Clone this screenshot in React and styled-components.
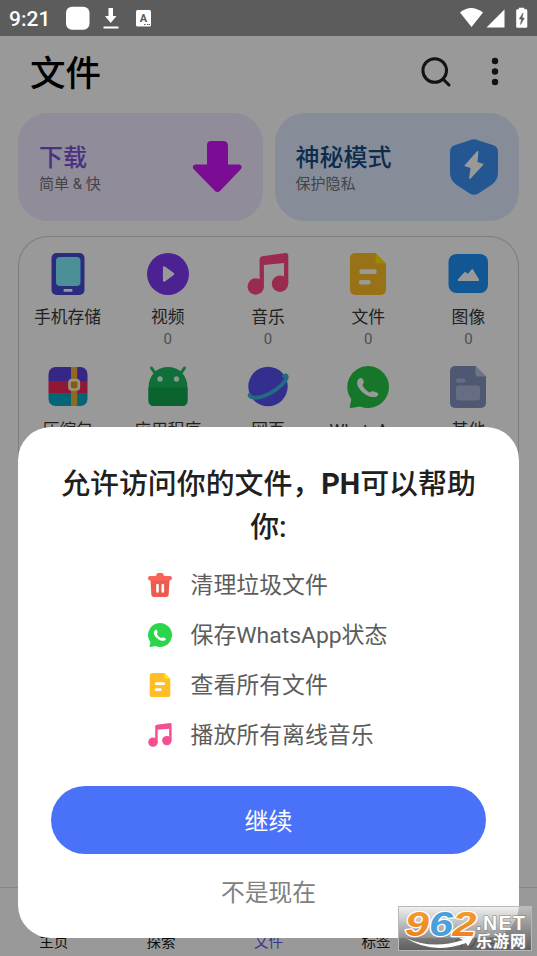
import styled, { createGlobalStyle } from "styled-components";

const GlobalStyle = createGlobalStyle`
	* {
		box-sizing: border-box;
	}
	body {
		margin: 0;
		font-family: Roboto, "Noto Sans CJK SC", sans-serif;
	}
	svg {
		display: block;
		flex: none;
		overflow: visible;
	}
`;

const Screen = styled.div`
	position: relative;
	width: 537px;
	height: 956px;
	overflow: hidden;
	display: flex;
	flex-direction: column;
	background-color: #ffffff;
`;
const StatusBar = styled.div`
	height: 36px;
	flex: none;
	display: flex;
	align-items: center;
	padding: 0 9px;
	background-color: #5c5c5c;
	color: white;
`;
const Clock = styled.span`
	width: 57px;
	font-size: 21px;
	font-weight: 500;
	line-height: 36px;
	padding-top: 1px;
`;
const Spacer = styled.div`
	flex: 1;
`;
const Header = styled.header`
	height: 77px;
	flex: none;
	display: flex;
	align-items: flex-start;
	padding: 10px 18px 0 30px;
`;
const PageTitle = styled.h1`
	flex: 1;
	margin: 0;
	font-size: 35.5px;
	line-height: 56px;
	font-weight: 500;
	color: #000;
`;
const HeaderActions = styled.div`
	display: flex;
	gap: 40px;
	padding: 11px 20px 0 0;
`;
const Cards = styled.div`
	display: flex;
	gap: 12px;
	padding: 0 18px;
`;
const Card = styled.div`
	flex: 1;
	height: 108px;
	display: flex;
	align-items: center;
	justify-content: space-between;
	padding: 0 21px;
	border-radius: 30px;
	background-color: ${(props) => props.$bg};
`;
const CardLabel = styled.div`
	padding-top: 4px;
`;
const CardTitle = styled.div`
	font-size: 24px;
	line-height: 30px;
	font-weight: 500;
	color: ${(props) => props.$color};
`;
const CardText = styled.div`
	font-size: 15px;
	line-height: 22px;
	color: #707078;
`;
const Panel = styled.div`
	flex: 1;
	margin: 15px 18px 20px;
	padding-top: 17px;
	box-shadow: inset 0 0 0 1px #d0d0d0;
	border-radius: 30px;
	display: grid;
	grid-template-columns: repeat(5, 1fr);
	grid-auto-rows: 112.5px;
`;
const Category = styled.div`
	display: flex;
	flex-direction: column;
	align-items: center;
	padding-right: 1px;
	white-space: nowrap;
`;
const CategoryName = styled.div`
	margin-top: 10px;
	font-size: 16.8px;
	line-height: 24px;
	color: #383838;
`;
const Count = styled.div`
	font-size: 15px;
	line-height: 20px;
	color: #858585;
`;
const Nav = styled.nav`
	height: 69px;
	flex: none;
	display: flex;
	align-items: flex-end;
	padding-bottom: 2px;
	border-top: 1px solid #dedede;
`;
const NavItem = styled.div`
	flex: 1;
	text-align: center;
	font-size: 14.5px;
	line-height: 22px;
	color: ${(props) => (props.$active ? "#6558ee" : "#181818")};
`;
const Scrim = styled.div`
	position: absolute;
	inset: 36px 0 0;
	padding: 391px 18px 18px;
	background-color: rgba(0, 0, 0, 0.4);
`;
const Sheet = styled.div`
	height: 511px;
	display: flex;
	flex-direction: column;
	align-items: center;
	padding-top: 36px;
	border-radius: 33px;
	background-color: white;
`;
const SheetTitle = styled.h2`
	margin: 0;
	width: 436px;
	text-align: center;
	font-size: 28.9px;
	line-height: 42.5px;
	font-weight: 500;
	color: #202020;
`;
const Latin = styled.span`
	font-weight: 700;
`;
const Features = styled.div`
	width: 242px;
	margin-top: 12px;
`;
const Feature = styled.div`
	height: 50px;
	display: flex;
	align-items: center;
	gap: 19px;
	font-size: 22.9px;
	line-height: 34px;
	white-space: nowrap;
	color: #5c5c5c;
`;
const FeatureText = styled.span`
	padding-top: 2px;
`;
const Continue = styled.button`
	width: 435px;
	height: 68px;
	margin-top: 26px;
	padding: 0 0 2px;
	border: 0;
	border-radius: 34px;
	font-family: inherit;
	font-size: 24px;
	font-weight: 400;
	color: white;
	background-color: #4a72f8;
`;
const Later = styled.button`
	margin-top: 20px;
	padding: 0;
	border: 0;
	background: none;
	font-family: inherit;
	font-size: 23.8px;
	line-height: 38px;
	color: #808080;
`;
const Watermark = styled.div`
	position: absolute;
	right: 5px;
	bottom: 5px;
	width: 134px;
	height: 45px;
	border: 1px solid #b9b9b9;
	background: linear-gradient(rgba(225, 225, 225, 0.5), rgba(85, 85, 85, 0.85));
`;

const PhoneIcon = () => (
	<svg width="42" height="42" viewBox="0 0 42 42">
		<rect x="4.5" width="33" height="42" rx="5" fill="#4949d5" />
		<rect x="9" y="4" width="24.5" height="29" rx="4" fill="#7df1fb" />
		<rect x="16.5" y="36" width="9" height="2.8" rx="1" fill="#fff" />
	</svg>
);
const VideoIcon = () => (
	<svg width="42" height="42" viewBox="0 0 42 42">
		<circle cx="21" cy="21" r="21" fill="#7f3af5" />
		<path d="M17.2 14.5L26 21L17.2 27.5Z" fill="#fff" stroke="#fff" strokeWidth="2.5" strokeLinejoin="round" />
	</svg>
);
const MusicIcon = ({ size = 42, color = "#ff4a82" }) => (
	<svg width={size} height={size} viewBox="0 0 42 42">
		<g fill={color}>
			<circle cx="8.7" cy="33.5" r="8.2" />
			<circle cx="33" cy="30.8" r="8.2" />
			<path d="M12.6 6.2Q12.6 3.6 15.2 3.2L38.6 0Q41.3-.2 41.3 2.5V31H37V10L16.9 12V34H12.6Z" />
		</g>
	</svg>
);
const FileIcon = ({ size = 42 }) => (
	<svg width={size} height={size} viewBox="0 0 42 42">
		<path d="M7 0H28.5L39 10.5V37A5 5 0 0 1 34 42H8A5 5 0 0 1 3 37V5A5 5 0 0 1 8 0Z" fill="#ffbd26" />
		<path d="M28.5 0L39 10.5H31A2.5 2.5 0 0 1 28.5 8Z" fill="#ffe600" />
		<path d="M14.5 18.6H27.5M14 29.2H21.5" fill="none" stroke="#fff" strokeWidth="4.6" strokeLinecap="round" />
	</svg>
);
const ImageIcon = () => (
	<svg width="42" height="42" viewBox="0 0 42 42">
		<rect x="1.5" y="1" width="39.5" height="39" rx="8" fill="#1b91f5" />
		<path d="M11.7 27L18.2 20L21 22.3L25.2 17L31.2 27Z" fill="#fff" stroke="#fff" strokeWidth="2" strokeLinejoin="round" />
	</svg>
);
const ZipIcon = () => (
	<svg width="42" height="42" viewBox="0 0 42 42">
		<clipPath id="zip">
			<rect x="1.5" y="1" width="39" height="39" rx="7" />
		</clipPath>
		<g clipPath="url(#zip)">
			<rect width="42" height="15" fill="#5b41dc" />
			<rect y="15" width="42" height="12" fill="#f22959" />
			<rect y="27" width="42" height="15" fill="#04abc9" />
			<rect x="24" width="6.2" height="42" fill="#efb12d" />
		</g>
		<rect x="22.5" y="14.2" width="9.3" height="9.3" rx="2.5" fill="#d49c20" stroke="#fff1d1" strokeWidth="2.7" />
	</svg>
);
const AndroidIcon = () => (
	<svg width="42" height="42" viewBox="0 0 42 42">
		<path d="M4.5 2L8 7M37.5 2L34 7" stroke="#16bd60" strokeWidth="3" strokeLinecap="round" />
		<path d="M1.5 22C1.5 9 10 1 21 1S40.5 9 40.5 22V34Q40.5 40 35 40H7Q1.5 40 1.5 34Z" fill="#1bb95e" />
		<path d="M1.5 21.5H40.5V34Q40.5 40 35 40H7Q1.5 40 1.5 34Z" fill="#13a74e" />
		<circle cx="13" cy="13" r="2.7" fill="#d9ffe9" />
		<circle cx="29.5" cy="13" r="2.7" fill="#d9ffe9" />
	</svg>
);
const PlanetIcon = () => (
	<svg width="42" height="42" viewBox="0 0 42 42">
		<circle cx="21" cy="20.5" r="19.7" fill="#554fef" />
		<path
			d="M2.6 28.8C2 33 13 32.800 23 27.300C32 22.500 39.500 15 39.800 11Q39.800 8.800 37 9.800"
			fill="none"
			stroke="#38b4d6"
			strokeWidth="3.8"
			strokeLinecap="round"
		/>
	</svg>
);
const WhatsAppIcon = ({ size = 42, color = "#26c545" }) => (
	<svg width={size} height={size} viewBox="0 0 42 42">
		<path d="M21 0A21 21 0 1 1 13 40.4L4 42Q2.5 42 2.8 40.5L4.3 33.5A21 21 0 0 1 21 0Z" fill={color} />
		<path
			d="M11.3 13.5C12.4 11.9 14.4 11.5 15.5 12.7C16.8 14.3 17.2 16.5 16.2 17.8L15.5 19C17 22.6 19.5 25 23 26.6L24.3 25.5C25.7 24.8 29.7 26 31 27.4C31.9 28.6 30 30.7 28 31C19.4 32.3 9.3 22 10.2 16C10.3 15 10.7 14.2 11.3 13.5Z"
			fill="#fff"
		/>
	</svg>
);
const OtherIcon = () => (
	<svg width="42" height="42" viewBox="0 0 42 42">
		<path d="M8 0H28.5L39 10.5V37A5 5 0 0 1 34 42H8A5 5 0 0 1 3 37V5A5 5 0 0 1 8 0Z" fill="#8493c0" />
		<path d="M28.5 0L39 10.5H31A2.5 2.5 0 0 1 28.5 8Z" fill="#b8c3df" />
		<rect x="9" y="12.5" width="9.5" height="4" rx="2" fill="#aab7dc" />
		<rect x="9" y="19.5" width="24" height="15" rx="3" fill="#aab7dc" />
	</svg>
);
const TrashIcon = () => (
	<svg width="24" height="24" viewBox="0 0 24 24">
		<path d="M2.5 7H21.5L20.7 21.5Q20.5 24 18 24H6Q3.5 24 3.3 21.5Z" fill="#eb5b4e" />
		<path d="M2 3H8Q8.3 0 10 0H14Q15.7 0 16 3H22Q24 3 24 5T22 7.5H2Q0 7.5 0 5.3T2 3Z" fill="#fa6357" />
		<path d="M9.5 12V18.5M14.8 12V18.500" stroke="#fff" strokeWidth="2.6" strokeLinecap="round" />
	</svg>
);
const SearchIcon = () => (
	<svg width="30" height="30" viewBox="0 0 30 30" fill="none" stroke="#202020" strokeWidth="3">
		<circle cx="13.7" cy="13.5" r="11.8" />
		<path d="M22 22L28 28" strokeLinecap="round" />
	</svg>
);
const MoreIcon = () => (
	<svg width="8" height="30" viewBox="0 0 8 30" fill="#202020">
		<circle cx="4" cy="4" r="3.2" />
		<circle cx="4" cy="14.5" r="3.2" />
		<circle cx="4" cy="25" r="3.2" />
	</svg>
);
const ArrowIcon = () => (
	<svg width="50" height="52" viewBox="0 0 50 52">
		<path
			d="M19 0H31Q36 0 36 5V23.5H47.5Q51 24.5 49 28L28 50Q25.500 52.3 23 50L1.5 28Q-.5 24.5 3 23.5H15V4Q15 0 19 0Z"
			fill="#cc16f7"
		/>
	</svg>
);
const ShieldIcon = () => (
	<svg width="48" height="56" viewBox="0 0 48 56">
		<path
			d="M20 1.2Q24-.7 28 1.2L43.500 6.2Q48 8 48 13V34Q48 41 42 45.5L28 54.7Q24 57 20 54.7L6 45.5Q0 41 0 34V13Q0 8 4.5 6.2Z"
			fill="#3d8ff2"
		/>
		<path d="M27.5 13L15.5 26.5L21.5 28.5L20 39L32.5 25.5L26.5 23.5Z" fill="#fff" stroke="#fff" strokeWidth="1.8" strokeLinejoin="round" />
	</svg>
);

const NoticeIcons = () => (
	<svg width="86" height="24" viewBox="0 0 86 24" fill="#fff">
		<rect width="23.5" height="23" y=".8" rx="6" />
		<path d="M42.5 2H47V10H50.5L44.7 17L39 10H42.5Z" />
		<rect x="37.5" y="20.5" width="15" height="2" />
		<rect x="70" y="4" width="15" height="16.5" rx="1.5" />
		<text x="77.5" y="15.8" textAnchor="middle" fontFamily="Roboto" fontSize="11" fontWeight="700" fill="#5c5c5c">
			A
		</text>
		<path d="M78 18h1.500v1H78zM81 18h1.500v1H81zM83 18h1v1h-1z" fill="#5c5c5c" />
	</svg>
);
const SystemIcons = () => (
	<svg width="68" height="22" viewBox="0 0 68 22" fill="#fff">
		<path d="M0 5.5Q11-3.5 23 5.5L11.5 20Z" />
		<path d="M44.5 2.5V20.5H26.5Z" />
		<path d="M58.8 2.2V.8H64.3V2.2H66Q67.3 2.2 67.3 3.5V19.5Q67.3 20.7 66 20.7H57.5Q56.2 20.7 56.2 19.5V3.5Q56.2 2.2 57.5 2.2Z" />
		<path d="M63 6L59.3 12H61.500L60.500 17.500L64.300 11H62Z" fill="#5c5c5c" stroke="#5c5c5c" strokeWidth=".6" />
	</svg>
);
const SiteLogo = () => (
	<svg width="132" height="43" viewBox="0 0 132 43">
		<defs>
			<linearGradient id="orange" x2="0" y2="1">
				<stop offset="0" stopColor="#f5a52e" />
				<stop offset="1" stopColor="#ef7a20" />
			</linearGradient>
		</defs>
		<path d="M7 31Q33 43 64 33L60 31L75 29L69 39L67 36Q33 48 7 31Z" fill="#fff" />
		<g
			fontFamily="Liberation Sans"
			fontStyle="italic"
			fontWeight="700"
			fontSize="35"
			stroke="#fff"
			strokeWidth="2.4"
			paintOrder="stroke"
			strokeLinejoin="round">
			<text x="6" y="28.5" fill="url(#orange)" textLength="24" lengthAdjust="spacingAndGlyphs">
				9
			</text>
			<text x="30" y="28.5" fill="#4a9fdc" textLength="24" lengthAdjust="spacingAndGlyphs">
				6
			</text>
			<text x="53.5" y="28.5" fill="url(#orange)" textLength="24" lengthAdjust="spacingAndGlyphs">
				2
			</text>
		</g>
		<g fill="#fff" stroke="#858585" strokeWidth="1.2" paintOrder="stroke" fontWeight="700">
			<text x="77" y="22.5" fontFamily="Liberation Sans" fontSize="19.5" letterSpacing="1.5">
				.NET
			</text>
			<text x="77" y="39.5" fontFamily="Noto Sans CJK SC" fontSize="16" textLength="50">
				乐游网
			</text>
		</g>
	</svg>
);

const categories = [
	{ name: "手机存储", icon: <PhoneIcon /> },
	{ name: "视频", icon: <VideoIcon />, count: 0 },
	{ name: "音乐", icon: <MusicIcon />, count: 0 },
	{ name: "文件", icon: <FileIcon />, count: 0 },
	{ name: "图像", icon: <ImageIcon />, count: 0 },
	{ name: "压缩包", icon: <ZipIcon /> },
	{ name: "应用程序", icon: <AndroidIcon /> },
	{ name: "网页", icon: <PlanetIcon /> },
	{ name: "WhatsApp", icon: <WhatsAppIcon /> },
	{ name: "其他", icon: <OtherIcon /> },
];
const tabs = ["主页", "探索", "文件", "标签", "个人中心"];
const features = [
	{ text: "清理垃圾文件", icon: <TrashIcon /> },
	{ text: "保存WhatsApp状态", icon: <WhatsAppIcon size={24} color="#2bd64b" /> },
	{ text: "查看所有文件", icon: <FileIcon size={24} /> },
	{ text: "播放所有离线音乐", icon: <MusicIcon size={24} color="#f44f91" /> },
];

const App = () => {
	return (
		<>
			<GlobalStyle />
			<Screen>
				<StatusBar>
					<Clock>9:21</Clock>
					<NoticeIcons />
					<Spacer />
					<SystemIcons />
				</StatusBar>
				<Header>
					<PageTitle>文件</PageTitle>
					<HeaderActions>
						<SearchIcon />
						<MoreIcon />
					</HeaderActions>
				</Header>
				<Cards>
					<Card $bg="#f1e9ff">
						<CardLabel>
							<CardTitle $color="#7c52d8">下载</CardTitle>
							<CardText>简单 &amp; 快</CardText>
						</CardLabel>
						<ArrowIcon />
					</Card>
					<Card $bg="#e0ecff">
						<CardLabel>
							<CardTitle $color="#164a82">神秘模式</CardTitle>
							<CardText>保护隐私</CardText>
						</CardLabel>
						<ShieldIcon />
					</Card>
				</Cards>
				<Panel>
					{categories.map((item) => (
						<Category key={item.name}>
							{item.icon}
							<CategoryName>{item.name}</CategoryName>
							{item.count !== undefined && <Count>{item.count}</Count>}
						</Category>
					))}
				</Panel>
				<Nav>
					{tabs.map((tab) => (
						<NavItem key={tab} $active={tab === "文件"}>
							{tab}
						</NavItem>
					))}
				</Nav>
				<Scrim>
					<Sheet>
						<SheetTitle>
							允许访问你的文件，<Latin>PH</Latin>可以帮助你:
						</SheetTitle>
						<Features>
							{features.map((item) => (
								<Feature key={item.text}>
									{item.icon}
									<FeatureText>{item.text}</FeatureText>
								</Feature>
							))}
						</Features>
						<Continue>继续</Continue>
						<Later>不是现在</Later>
					</Sheet>
				</Scrim>
				<Watermark>
					<SiteLogo />
				</Watermark>
			</Screen>
		</>
	);
};

export default App;
